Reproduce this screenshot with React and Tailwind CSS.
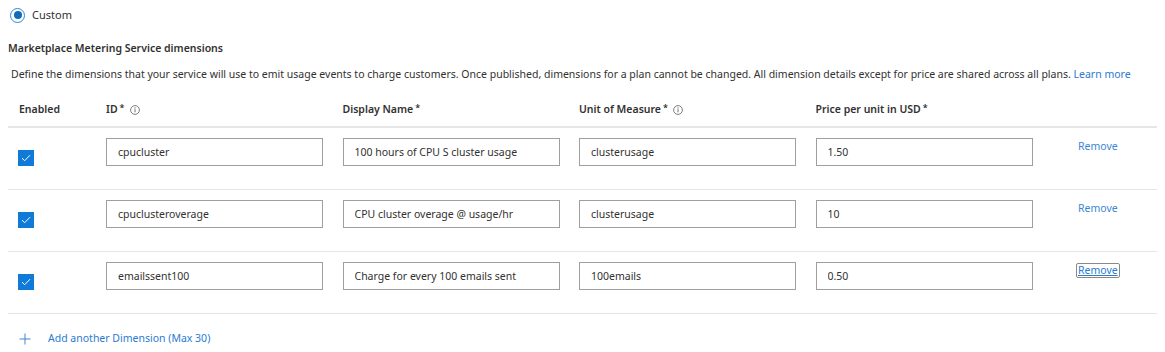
import React, { useState } from 'react';

const rows = [
  { id: 'cpucluster', name: '100 hours of CPU S cluster usage', unit: 'clusterusage', price: '1.50' },
  { id: 'cpuclusteroverage', name: 'CPU cluster overage @ usage/hr', unit: 'clusterusage', price: '10' },
  { id: 'emailssent100', name: 'Charge for every 100 emails sent', unit: '100emails', price: '0.50', focused: true },
];

const InfoIcon = () => (
  <svg width="10" height="10" viewBox="0 0 10 10" className="ml-[5px]">
    <circle cx="5" cy="5" r="4.4" fill="none" stroke="#605e5c" strokeWidth="0.8" />
    <line x1="5" y1="4.2" x2="5" y2="7.3" stroke="#605e5c" strokeWidth="0.9" />
    <circle cx="5" cy="2.9" r="0.55" fill="#605e5c" />
  </svg>
);

const Header = ({ label, info }) => (
  <div className="flex items-center font-semibold text-[#323130]">
    {label}
    <span className="ml-[2px] text-[9px] relative -top-[2px]">*</span>
    {info && <InfoIcon />}
  </div>
);

const Field = ({ value }) => (
  <input
    defaultValue={value}
    className="w-[217px] h-[28px] border border-[#a19f9d] bg-white px-[11px] text-[10.5px] text-[#323130] outline-none"
  />
);

const DimensionRow = ({ row }) => (
  <div className="grid grid-cols-[98px_236.5px_236.5px_236.5px_236.5px_1fr] h-[62px] border-b border-[#e5e5e5]">
    <div className="pl-[10px] pt-[22px]">
      <div className="w-[16px] h-[16px] bg-[#0f7ad8] flex items-center justify-center">
        <svg width="10" height="8" viewBox="0 0 10 8">
          <path d="M1 4.2 L3.7 6.7 L9 1.2" fill="none" stroke="white" strokeWidth="1" />
        </svg>
      </div>
    </div>
    <div className="pt-[10px]"><Field value={row.id} /></div>
    <div className="pt-[10px]"><Field value={row.name} /></div>
    <div className="pt-[10px]"><Field value={row.unit} /></div>
    <div className="pt-[10px]"><Field value={row.price} /></div>
    <div className="pl-[26px] pt-[11px]">
      {row.focused ? (
        <span className="inline-block -ml-[2px] px-[1px] border border-[#8a8886] rounded-[2px] leading-[13px] text-[#2b7bd0] underline">Remove</span>
      ) : (
        <span className="leading-[14px] text-[#3c87d4]">Remove</span>
      )}
    </div>
  </div>
);

export default function App() {
  const [custom] = useState(true);

  return (
    <div className="w-[1165px] h-[352px] bg-white text-[10.5px] text-[#323130] font-['Noto_Sans','Open_Sans',sans-serif] px-[8px] pt-[8px]">
      <div className="flex items-center h-[14px] pl-[2px]">
        <div className="w-[15px] h-[15px] rounded-full border-[1.5px] border-[#2b88d8] flex items-center justify-center">
          {custom && <div className="w-[8px] h-[8px] rounded-full bg-[#0f6cbd]" />}
        </div>
        <span className="ml-[7px] text-[11px]">Custom</span>
      </div>

      <div className="mt-[18px] h-[16px] leading-[16px] font-semibold">Marketplace Metering Service dimensions</div>

      <div className="mt-[10px] h-[16px] leading-[16px] pl-[3px] whitespace-nowrap">
        Define the dimensions that your service will use to emit usage events to charge customers. Once published, dimensions for a plan cannot be changed. All dimension details except for price are shared across all plans.{' '}
        <span className="text-[#2b7bd0]">Learn more</span>
      </div>

      <div className="mt-[12px] w-[1149px]">
        <div className="grid grid-cols-[98px_236.5px_236.5px_236.5px_236.5px_1fr] h-[34px] items-center border-b-2 border-[#e6e6e6]">
          <div className="pl-[11px] font-semibold">Enabled</div>
          <Header label="ID" info />
          <Header label="Display Name" />
          <Header label="Unit of Measure" info />
          <Header label="Price per unit in USD" />
          <div />
        </div>
        {rows.map((row) => (
          <DimensionRow key={row.id} row={row} />
        ))}
      </div>

      <div className="flex items-center mt-[17px] pl-[11px] text-[#2b7bd0] text-[11px]">
        <svg width="12" height="12" viewBox="0 0 12 12">
          <path d="M6 0.5 V11.5 M0.5 6 H11.5" stroke="#3c87d4" strokeWidth="1" />
        </svg>
        <span className="ml-[17px] text-[10.5px]">Add another Dimension (Max 30)</span>
      </div>
    </div>
  );
}
